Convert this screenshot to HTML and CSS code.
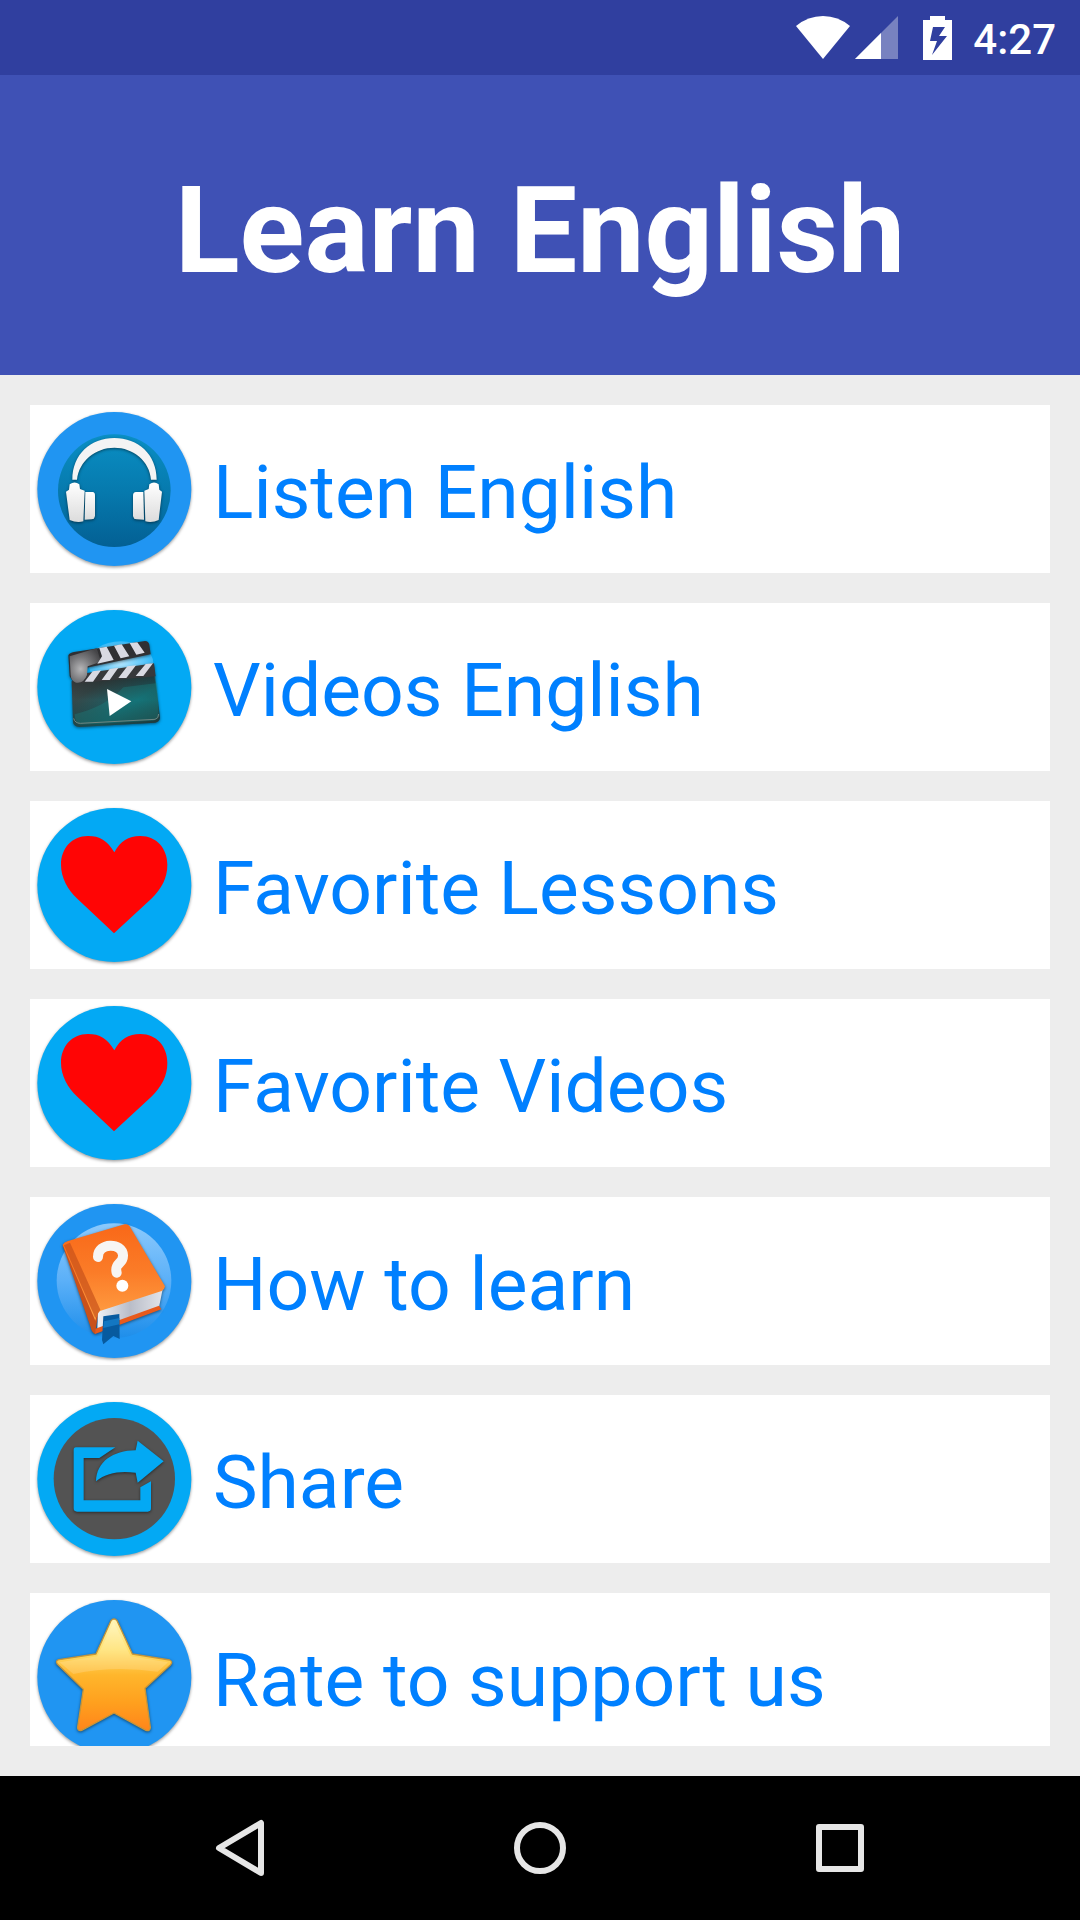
FILE: index.html
```html
<!DOCTYPE html>
<html lang="en">
<head>
    <meta charset="UTF-8">
    <meta name="viewport" content="width=device-width, initial-scale=1.0">
    <title>Learn English</title>
    <link rel="stylesheet" href="styles.css">
</head>
<body>

    <div class="status-bar">
        <svg class="wifi" viewBox="0 0 54 43" aria-hidden="true">
            <path d="M0 10Q12 0 27 0T54 10L27 43Z" fill="#fff"/>
        </svg>
        <svg class="signal" viewBox="0 0 43 43" aria-hidden="true">
            <path d="M0 43L43 0V43Z" fill="#fff" fill-opacity=".35"/>
            <path d="M0 43L26 17V43Z" fill="#fff"/>
        </svg>
        <svg class="battery" viewBox="0 0 29 44" aria-hidden="true">
            <path fill-rule="evenodd" d="M7 0H22V4H29V44H0V4H7ZM10 11L7 25H14L9 39L24 20H16L22 11Z" fill="#fff"/>
        </svg>
        <span class="clock">4:27</span>
    </div>

    <header class="header">
        <h1>Learn English</h1>
    </header>

    <main class="menu">
        <!-- Listen -->
        <button type="button" class="menu-item">
            <svg class="icon" viewBox="30 30 504 504" aria-hidden="true">
                <defs>
                    <linearGradient id="disc" x1="0" y1="0" x2="0" y2="1">
                        <stop offset="0" stop-color="#0a8fc4"/>
                        <stop offset=".5" stop-color="#067aae"/>
                        <stop offset="1" stop-color="#036094"/>
                    </linearGradient>
                    <linearGradient id="cup" x1="0" y1="0" x2="0" y2="1">
                        <stop offset="0" stop-color="#fff"/>
                        <stop offset="1" stop-color="#dcdcdc"/>
                    </linearGradient>
                </defs>
                <circle class="base blue" cx="283" cy="282" r="231"/>
                <circle cx="283" cy="287" r="169" fill="url(#disc)"/>
                <g class="soft">
                    <path d="M157 254C157 178 212 129 283 129S410 178 410 254H393C389 198 340 158 283 158S177 198 171 254Z" fill="#f4f4f4"/>
                    <path d="M147 284L149 268Q164 257 178 268L180 282L194 287L190 379Q170 384 149 375L138 290Z" fill="url(#cup)"/>
                    <path d="M196 291H218Q225 292 225 301V362Q224 371 215 373L194 374Z" fill="url(#cup)"/>
                    <path d="M418 284L416 268Q402 257 388 268L386 282L373 287L376 379Q397 384 416 375L426 290Z" fill="url(#cup)"/>
                    <path d="M370 291H348Q339 292 339 301V362Q340 371 350 373L372 374Z" fill="url(#cup)"/>
                </g>
            </svg>
            <span>Listen English</span>
        </button>

        <!-- Videos -->
        <button type="button" class="menu-item">
            <svg class="icon" viewBox="30 30 504 504" aria-hidden="true">
                <defs>
                    <linearGradient id="board" x1="0" y1="0" x2="1" y2="1">
                        <stop offset="0" stop-color="#4d4d50"/>
                        <stop offset=".3" stop-color="#35494a"/>
                        <stop offset=".65" stop-color="#146870"/>
                        <stop offset="1" stop-color="#203c3c"/>
                    </linearGradient>
                    <linearGradient id="fade" x1="0" y1="0" x2="0" y2="1">
                        <stop offset="0" stop-color="#222" stop-opacity=".7"/>
                        <stop offset=".5" stop-color="#222" stop-opacity="0"/>
                        <stop offset="1" stop-color="#203030" stop-opacity=".5"/>
                    </linearGradient>
                    <radialGradient id="hinge" cx=".35" cy=".6" r=".7">
                        <stop offset="0" stop-color="#b5b5b7"/>
                        <stop offset=".5" stop-color="#77777a"/>
                        <stop offset="1" stop-color="#454548"/>
                    </radialGradient>
                    <radialGradient id="glow">
                        <stop offset="0" stop-color="#b0e5ff"/>
                        <stop offset="1" stop-color="#39baf8"/>
                    </radialGradient>
                </defs>
                <circle class="base sky" cx="283" cy="282" r="231"/>
                <ellipse cx="302" cy="210" rx="98" ry="65" fill="url(#glow)"/>
                <g class="soft">
                    <path d="M155 265L402 220L420 374Q419 386 405 389L178 402Q161 401 159 387Z" fill="url(#board)"/>
                    <path d="M155 265L402 240L420 374Q419 386 405 389L178 402Q161 401 159 387Z" fill="url(#fade)"/>
                    <path d="M196 241L402 211L407 250L182 270Z" fill="#37383b"/>
                    <path d="M145 187Q149 179 162 177L375 144Q386 145 388 155L392 184L200 224L198 258Q180 279 158 264L149 250Z" fill="#303033"/>
                </g>
                <path d="M149 190L230 166L243 206L203 220L201 246Q191 273 168 269Q153 263 152 246Z" fill="url(#hinge)"/>
                <path d="M238 165L260 161L281 201L232 212L246 190ZM282 158L305 154L328 190L302 196ZM329 150L352 148L374 179L349 185ZM218 235L243 232L219 266H194ZM269 228L295 224L269 261H245ZM322 220L348 217L319 255H295ZM377 213L399 211L370 249H347Z" fill="#d9d9e2"/>
                <path d="M164 364Q260 340 310 283L412 270L416 370Q412 380 400 383L180 395Q165 390 164 364Z" fill="#19948f" fill-opacity=".28"/>
                <path d="M261 288L334 325L269 369Z" fill="#fff"/>
                <path d="M161 376Q165 391 181 391L405 379Q416 377 416 363" fill="none" stroke="#6f8582" stroke-width="3"/>
            </svg>
            <span>Videos English</span>
        </button>

        <!-- Favorites -->
        <button type="button" class="menu-item">
            <svg class="icon" viewBox="30 33 504 504" aria-hidden="true">
                <circle class="base sky" cx="283" cy="285" r="231"/>
                <path d="M283 187C262 151 239 138 204 138C155 138 123 176 123 224C123 263 143 299 172 326L282 430L394 326C425 296 442 264 442 224C442 176 410 138 361 138C325 138 301 153 283 187Z" fill="#ff0505"/>
            </svg>
            <span>Favorite Lessons</span>
        </button>

        <button type="button" class="menu-item">
            <svg class="icon" viewBox="30 33 504 504" aria-hidden="true">
                <circle class="base sky" cx="283" cy="285" r="231"/>
                <path d="M283 187C262 151 239 138 204 138C155 138 123 176 123 224C123 263 143 299 172 326L282 430L394 326C425 296 442 264 442 224C442 176 410 138 361 138C325 138 301 153 283 187Z" fill="#ff0505"/>
            </svg>
            <span>Favorite Videos</span>
        </button>

        <!-- How to learn -->
        <button type="button" class="menu-item">
            <svg class="icon" viewBox="30 21 504 504" aria-hidden="true">
                <defs>
                    <linearGradient id="ring" x1="0" y1="0" x2="0" y2="1">
                        <stop offset="0" stop-color="#8bc9fc"/>
                        <stop offset=".5" stop-color="#5bb0f8"/>
                        <stop offset="1" stop-color="#1e8eea"/>
                    </linearGradient>
                    <linearGradient id="cover" x1="0" y1="0" x2="0" y2="1">
                        <stop offset="0" stop-color="#f96818"/>
                        <stop offset=".5" stop-color="#fb7c28"/>
                        <stop offset="1" stop-color="#ffa044"/>
                    </linearGradient>
                    <linearGradient id="pages" x1="0" y1="0" x2="1" y2="0">
                        <stop offset="0" stop-color="#eef0f5"/>
                        <stop offset=".5" stop-color="#b9bdc8"/>
                        <stop offset="1" stop-color="#e2e4ea"/>
                    </linearGradient>
                </defs>
                <circle class="base blue" cx="283" cy="273" r="231"/>
                <circle cx="282" cy="272" r="172" fill="url(#ring)"/>
                <g class="soft">
                    <path d="M128 166L145 155L236 362L225 432Q214 426 212 412Z" fill="#c9511a"/>
                    <path d="M234 361L428 298L417 352L232 419Z" fill="url(#pages)"/>
                    <path d="M225 432L226 416L417 347L424 358Z" fill="#e85a1c"/>
                    <path d="M128 164Q132 156 144 153L314 103Q324 101 329 109L435 289Q434 299 425 303L240 363Q230 370 226 392Z" fill="url(#cover)"/>
                </g>
                <path d="M132 166L150 158L241 359L226 384Z" fill="#c8511a" fill-opacity=".7"/>
                <path d="M234 201C233 157 307 156 309 196C310 223 282 218 290 248" fill="none" stroke="#f7f5f3" stroke-width="30" stroke-linecap="round" stroke-linejoin="round"/>
                <circle cx="307" cy="287" r="18" fill="#fff"/>
                <path d="M250 379L298 372L299 447L280 438L250 463L246 450Z" fill="#075a9f"/>
                <path d="M252 394L298 384V403L250 414Z" fill="#1377c2"/>
            </svg>
            <span>How to learn</span>
        </button>

        <!-- Share -->
        <button type="button" class="menu-item">
            <svg class="icon" viewBox="30 21 504 504" aria-hidden="true">
                <circle class="base sky" cx="283" cy="273" r="231"/>
                <circle cx="283" cy="272" r="182" fill="#535353"/>
                <g class="soft sky">
                    <path d="M168 178H286L238 210H191V337H361V298L393 280V361Q393 371 383 371H171Q161 371 161 361V186Q161 178 168 178Z"/>
                    <path d="M228 280C230 221 278 188 347 187L353 158L431 220L353 284L347 254C298 248 260 254 228 280Z"/>
                </g>
            </svg>
            <span>Share</span>
        </button>

        <!-- Rate -->
        <button type="button" class="menu-item">
            <svg class="icon" viewBox="30 21 504 504" aria-hidden="true">
                <defs>
                    <linearGradient id="gold" x1="0" y1="0" x2="0" y2="1">
                        <stop offset="0" stop-color="#fff6b8"/>
                        <stop offset=".28" stop-color="#ffe06b"/>
                        <stop offset=".5" stop-color="#ffb62c"/>
                        <stop offset=".75" stop-color="#ffa01e"/>
                        <stop offset="1" stop-color="#ff851a"/>
                    </linearGradient>
                </defs>
                <circle class="base blue" cx="283" cy="273" r="231"/>
                <path class="soft" d="M273 104Q282 94 291 104L337 204L449 222Q460 227 451 237L375 307L391 425Q389 437 378 433L282 381L185 433Q172 436 173 423L190 310L112 234Q105 224 117 221L228 204Z" fill="url(#gold)" stroke="#c79639" stroke-width="4" stroke-linejoin="round"/>
                <path d="M119 229L232 211L281 109L332 211L444 229L413 257Q281 238 160 264Z" fill="#fff" fill-opacity=".17"/>
            </svg>
            <span>Rate to support us</span>
        </button>
    </main>

    <nav class="nav-bar">
        <button type="button" aria-label="Back">
            <svg viewBox="0 0 60 60" aria-hidden="true"><path d="M51 5V55L9 30Z"/></svg>
        </button>
        <button type="button" aria-label="Home">
            <svg viewBox="0 0 60 60" aria-hidden="true"><circle cx="30" cy="30" r="23"/></svg>
        </button>
        <button type="button" aria-label="Recent apps">
            <svg viewBox="0 0 60 60" aria-hidden="true"><path d="M9 9H51V51H9Z"/></svg>
        </button>
    </nav>

</body>
</html>
```
FILE: styles.css
```css
* {
    box-sizing: border-box;
}
body {
    display: flex;
    flex-direction: column;
    height: 100vh;
    margin: 0;
    background-color: #ededed;
    font-family: Roboto, sans-serif;
}
button {
    padding: 0;
    border: none;
    font-family: inherit;
    cursor: pointer;
}
svg {
    display: block;
    flex: none;
}

/* top bars */
.status-bar {
    display: flex;
    flex: none;
    align-items: center;
    justify-content: flex-end;
    height: 75px;
    padding-right: 24px;
    background-color: #303f9f;
    color: #fff;
}
.wifi {
    width: 54px;
    height: 43px;
    margin-right: 5px;
}
.signal {
    width: 43px;
    height: 43px;
    margin-right: 25px;
}
.battery {
    width: 29px;
    height: 44px;
    margin-right: 21px;
}
.clock {
    padding-top: 3px;
    font-size: 42px;
    font-weight: 500;
}
.header {
    display: flex;
    flex: none;
    align-items: center;
    justify-content: center;
    height: 300px;
    background-color: #3f51b5;
    color: #fff;
}
.header h1 {
    margin: 0;
    padding-top: 12px;
    font-size: 120px;
    font-weight: bold;
}

/* menu list */
.menu {
    display: flex;
    flex: 1;
    flex-direction: column;
    gap: 30px;
    min-height: 0;
    margin: 30px;
    overflow: hidden;
}
.menu-item {
    display: flex;
    flex: none;
    align-items: center;
    gap: 15px;
    width: 100%;
    height: 168px;
    background-color: #fff;
    color: #0080ff;
    font-size: 75px;
    text-align: left;
}
.menu-item span {
    padding-top: 6px;
}
.icon {
    width: 168px;
    height: 168px;
}
.base {
    filter: drop-shadow(0 4px 4px rgba(0, 0, 0, 0.4));
}
.soft {
    filter: drop-shadow(0 3px 4px rgba(0, 0, 0, 0.5));
}
.blue {
    fill: #2095f2;
}
.sky {
    fill: #03a9f4;
}

/* system buttons */
.nav-bar {
    display: flex;
    flex: none;
    height: 144px;
    padding: 0 90px;
    background-color: #000;
}
.nav-bar button {
    display: flex;
    flex: 1;
    align-items: center;
    justify-content: center;
    background: none;
}
.nav-bar svg {
    width: 60px;
    height: 60px;
    fill: none;
    stroke: #e6e6e6;
    stroke-width: 6px;
    stroke-linejoin: round;
}
```
